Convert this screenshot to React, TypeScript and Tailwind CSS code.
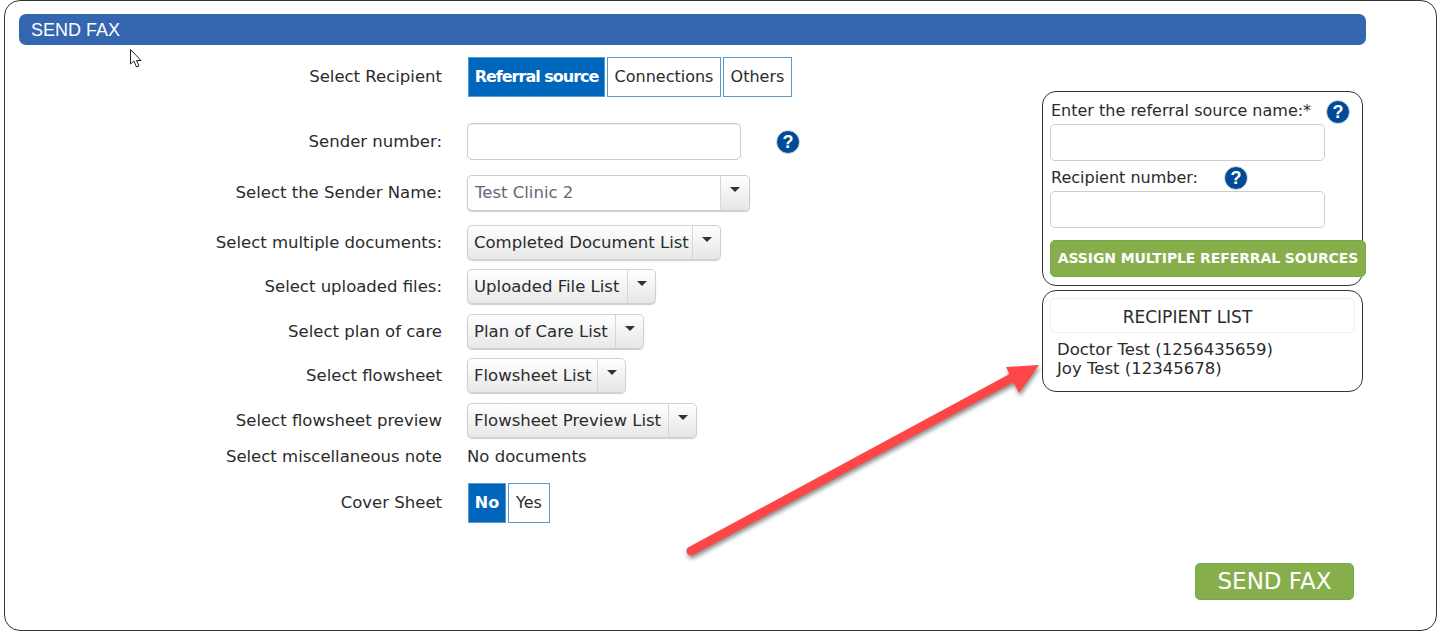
import type { ReactNode } from 'react'

const FONT = "font-['DejaVu_Sans',sans-serif]"

function HelpIcon() {
  return (
    <span className="flex h-6 w-6 shrink-0 items-center justify-center rounded-full border border-[#dfe4ea] bg-[#004b98] font-['Liberation_Sans',sans-serif] text-lg leading-none font-bold text-white">
      ?
    </span>
  )
}

function Row({ label, className, labelClass = '', children }: { label: string; className: string; labelClass?: string; children: ReactNode }) {
  return (
    <div className={`flex items-center ${className}`}>
      <span className={`w-[437px] shrink-0 text-right whitespace-nowrap ${labelClass}`}>{label}</span>
      <div className="ml-[25px] flex items-center">{children}</div>
    </div>
  )
}

function Caret({ className }: { className: string }) {
  return (
    <span className={`flex items-start justify-center rounded-r-[5px] border-l border-[#d6d6d6] bg-gradient-to-b from-white to-[#e6e6e6] pt-[11px] ${className}`}>
      <span className="h-0 w-0 border-x-[5px] border-t-[5px] border-x-transparent border-t-[#333]" />
    </span>
  )
}

function DropDown({ text, width }: { text: string; width: string }) {
  return (
    <div className={`flex h-[35px] items-stretch rounded-[5px] border border-[#d0d0d0] bg-gradient-to-b from-white to-[#e8e8e8] shadow-[0_1px_1px_rgba(0,0,0,0.2)] ${width}`}>
      <span className="flex-1 pl-[6px] leading-[34px] whitespace-nowrap">{text}</span>
      <Caret className="w-[28px]" />
    </div>
  )
}

function Toggle({ text, active, className }: { text: string; active?: boolean; className: string }) {
  return (
    <button
      type="button"
      className={`h-10 border border-[#5b9bc9] text-center text-base ${active ? 'bg-[#0066bb] font-bold text-white' : 'bg-white text-[#2b2b2b]'} ${className}`}
    >
      {text}
    </button>
  )
}

export default function App() {
  return (
    <div className={`h-[636px] w-[1444px] overflow-hidden bg-white text-[16.5px] text-[#2b2b2b] ${FONT}`}>
      <div className="relative ml-1 h-[631px] w-[1433px] rounded-[16px] border border-[#333] pt-[13px]">
        <div className="ml-[14px] h-[31px] w-[1347px] rounded-[7px] bg-[#3566b0] pl-[12px] font-['Liberation_Sans',sans-serif] text-lg leading-[32px] text-white">
          SEND FAX
        </div>

        <div className="flex items-start">
          <div className="w-[1037px] shrink-0">
            <Row label="Select Recipient" className="mt-3 h-10">
              <div className="ml-[1px] flex gap-[2px]">
                <Toggle text="Referral source" active className="w-[137px] tracking-[-1px]" />
                <Toggle text="Connections" className="w-[114px]" />
                <Toggle text="Others" className="w-[69px]" />
              </div>
            </Row>
            <Row label="Sender number:" labelClass="pt-[2px]" className="mt-[26px] h-[37px]">
              <div className="h-[37px] w-[274px] rounded-[5px] border border-[#ccc] bg-white shadow-[inset_0_1px_1px_rgba(0,0,0,0.08)]" />
              <span className="ml-[35px]"><HelpIcon /></span>
            </Row>
            <Row label="Select the Sender Name:" className="mt-[15px] h-9">
              <div className="flex h-9 w-[283px] items-stretch rounded-[5px] border border-[#ccc] bg-white shadow-[0_1px_1px_rgba(0,0,0,0.2)]">
                <span className="flex-1 pl-[7px] leading-[34px] text-[#667]">Test Clinic 2</span>
                <Caret className="w-[29px]" />
              </div>
            </Row>
            <Row label="Select multiple documents:" labelClass="pt-[2px]" className="mt-[14px] h-[35px]">
              <DropDown text="Completed Document List" width="w-[254px]" />
            </Row>
            <Row label="Select uploaded files:" labelClass="pt-[2px]" className="mt-[9px] h-[35px]">
              <DropDown text="Uploaded File List" width="w-[189px]" />
            </Row>
            <Row label="Select plan of care" labelClass="pt-[2px]" className="mt-[10px] h-[35px]">
              <DropDown text="Plan of Care List" width="w-[177px]" />
            </Row>
            <Row label="Select flowsheet" labelClass="pt-[2px]" className="mt-[9px] h-[35px]">
              <DropDown text="Flowsheet List" width="w-[159px]" />
            </Row>
            <Row label="Select flowsheet preview" labelClass="pt-[2px]" className="mt-[10px] h-[35px]">
              <DropDown text="Flowsheet Preview List" width="w-[230px]" />
            </Row>
            <Row label="Select miscellaneous note" className="mt-[8px] h-[22px]">
              <span>No documents</span>
            </Row>
            <Row label="Cover Sheet" className="mt-[15px] h-10">
              <div className="ml-[1px] flex gap-[2px]">
                <Toggle text="No" active className="w-[38px]" />
                <Toggle text="Yes" className="w-[42px]" />
              </div>
            </Row>
          </div>

          <div className="mt-[46px] w-[321px] shrink-0">
            <div className="relative h-[195px] rounded-[14px] border border-[#333] pt-[6px] pl-[7px]">
              <div className="flex h-[26px] items-center pl-[1px]">
                <span className="text-base whitespace-nowrap">Enter the referral source name:*</span>
              </div>
              <span className="absolute top-[8px] left-[283px]"><HelpIcon /></span>
              <div className="h-[37px] w-[275px] rounded-[5px] border border-[#ccc] bg-white" />
              <div className="mt-[3px] flex h-[27px] items-center pl-[1px]">
                <span className="text-base whitespace-nowrap">Recipient number:</span>
              </div>
              <span className="absolute top-[74px] left-[181px]"><HelpIcon /></span>
              <div className="h-[37px] w-[275px] rounded-[5px] border border-[#ccc] bg-white" />
              <button type="button" className="mt-[12px] h-[37px] w-[316px] rounded-[5px] border border-[#6fae4c] bg-[#86ae4b] pb-[1px] text-center text-[14px] font-bold tracking-[-0.1px] whitespace-nowrap text-white">
                ASSIGN MULTIPLE REFERRAL SOURCES
              </button>
            </div>
            <div className="mt-1 h-[102px] rounded-[14px] border border-[#333] pt-[7px] pl-[7px]">
              <div className="h-[35px] w-[305px] rounded-[5px] border border-[#eee] pr-[30px] text-center text-[17px] leading-[36px]">RECIPIENT LIST</div>
              <div className="mt-[7px] pl-[7px] leading-[19px]">
                <div>Doctor Test (1256435659)</div>
                <div>Joy Test (12345678)</div>
              </div>
            </div>
          </div>
        </div>

        <button type="button" className="absolute top-[562px] left-[1190px] h-[37px] w-[159px] rounded-[5px] border border-[#6fae4c] bg-[#86ae4b] text-center text-[23px] leading-none text-white">
          SEND FAX
        </button>

        {/* mouse cursor left in the screenshot */}
        <svg className="absolute top-[48px] left-[125px]" width="14" height="20" viewBox="0 0 14 20">
          <path d="M0.5 0.5 V15 L4 12 L6.5 18 L9 17 L6.5 11.5 H11 Z" fill="white" stroke="#222" strokeWidth="1" />
        </svg>

        {/* red annotation arrow */}
        <svg className="absolute top-0 left-0 drop-shadow-[1px_3px_2px_rgba(0,0,0,0.45)]" width="1100" height="600" viewBox="4 0 1100 600">
          <path d="M690 550 L1020 372" stroke="#ff4646" strokeWidth="9" strokeLinecap="round" fill="none" />
          <path d="M1038 364 L1005 366 L1018 392 Z" fill="#ff4646" />
        </svg>
      </div>
    </div>
  )
}
